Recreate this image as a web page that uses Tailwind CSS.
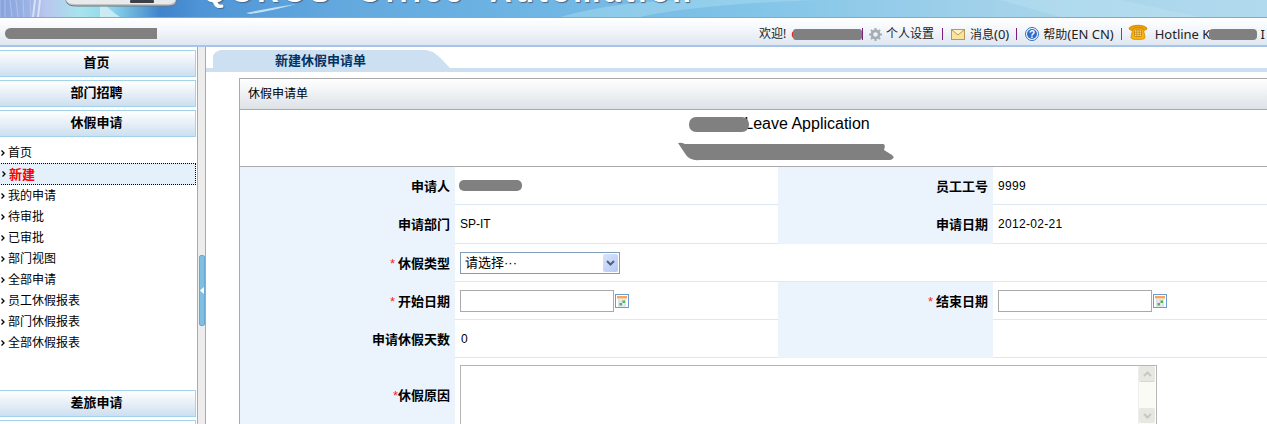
<!DOCTYPE html>
<html lang="zh-CN">
<head>
<meta charset="utf-8">
<title>休假申请单</title>
<script src="https://cdn.jsdelivr.net/npm/@tailwindcss/browser@4"></script>
</head>
<body class="bg-white">
<div class="flex h-[424px] w-[1267px] flex-col overflow-hidden bg-white font-['Liberation_Sans','Noto_Sans_CJK_SC',sans-serif] text-[12px] leading-none text-black">

  <!-- banner -->
  <header class="relative h-[18px] shrink-0 overflow-hidden border-b border-[#7fa8dc] bg-[linear-gradient(90deg,#86a3dc_0,#9db4e6_30px,#b9c6ee_45px,#a9e3ee_80px,#8fd8ea_110px,#3f84cc_160px,#4f94d6_200px,#62a8de_330px,#6cb3e3_500px,#83c5e8_760px,#a3d2ea_1000px,#b2daee_1267px)]">
    <svg class="absolute left-0 top-0" width="1267" height="17" viewBox="0 0 1267 17">
      <path d="M0 0v17M5 0v17M10 0l2 17M16 0l2 17M23 0l1 17M30 0l1 17" stroke="#c6d2f2" stroke-width="1" opacity=".6"/>
      <path d="M35 0 L33 17 M40 0 L38 17" stroke="#e8ecfb" stroke-width="2" opacity=".8"/>
      <path d="M100 0 Q112 12 120 17 L100 17 Z" fill="#dff4f8" opacity=".7"/>
      <path d="M66 0 C67 5 70 6 78 6 L168 6 C174 6 177 3 176 0 Z" fill="#c2c4c6" stroke="#6f7478" stroke-width="1"/>
      <path d="M66 0 C67 3 70 4 78 4 L168 4 C172 4 175 2 176 0 Z" fill="#e9eaec"/>
      <rect x="130" y="0" width="24" height="3" rx="1" fill="#3c4046"/>
      <path d="M246 13 Q270 8 296 4 Q272 11 250 14 Z" fill="#d8f0fa" opacity=".8"/>
      <path d="M560 17 Q620 0 700 0 L820 0 Q700 4 640 17 Z" fill="#a8dcf0" opacity=".5"/>
      <path d="M1000 0 L1120 0 L1200 17 L1060 17 Z" fill="#c4e6f4" opacity=".35"/>
    </svg>
    <span class="absolute left-[203px] top-[-24px] whitespace-nowrap text-[30px] font-bold leading-[32px] tracking-[3.8px] text-white [text-shadow:1px_1px_1px_#44668c]">QOROS&nbsp;&nbsp;Office&nbsp;&nbsp;Automation</span>
  </header>

  <!-- top bar -->
  <div class="flex h-[29px] shrink-0 items-center justify-between border-b-2 border-[#a7c4ea] bg-[linear-gradient(180deg,#ffffff_0,#f4f7fb_40%,#dfe7f1_100%)] pt-[4px] font-['Noto_Sans','Noto_Sans_CJK_SC',sans-serif] text-[#222]">
    <div class="ml-[5px] h-[11px] w-[152px] rounded-l-full rounded-r-[5px] bg-[#808080]"></div>
    <div class="mt-px flex w-[508px] shrink-0 items-center whitespace-nowrap">
      <span>欢迎!</span>
      <span class="ml-[5px] text-[#e00000]">c</span>
      <span class="ml-[-4px] h-[11px] w-[69px] rounded-[3px] bg-[#808080]"></span>
      <span class="h-[12px] w-px bg-[#7a1f7a]"></span>
      <svg class="ml-[6px]" width="13" height="13" viewBox="0 0 13 13"><circle cx="6.500" cy="6.500" r="3.600" fill="none" stroke="#a3adb3" stroke-width="2.600"/><path d="M6.500 0v2.400M6.500 10.600V13M0 6.500h2.400M10.600 6.500H13M1.900 1.900l1.700 1.700M9.400 9.400l1.700 1.700M1.900 11.100l1.700-1.700M9.400 3.600l1.700-1.700" stroke="#a3adb3" stroke-width="2"/></svg>
      <span class="ml-[4px]">个人设置</span>
      <span class="ml-[8px] h-[12px] w-px bg-[#7a1f7a]"></span>
      <svg class="ml-[8px]" width="14" height="11" viewBox="0 0 14 11"><rect x=".5" y=".5" width="13" height="10" fill="#f8e3a0" stroke="#b89a4c"/><path d="M1 1l6 5 6-5" fill="#fdf1c6" stroke="#b89a4c"/></svg>
      <span class="ml-[5px]">消息<span class="text-[13px]">(0)</span></span>
      <span class="ml-[7px] h-[12px] w-px bg-[#7a1f7a]"></span>
      <svg class="ml-[8px]" width="14" height="14" viewBox="0 0 14 14"><circle cx="7" cy="7" r="6.500" fill="#fff" stroke="#2f6fc4"/><circle cx="7" cy="7" r="5" fill="#2f6cc8"/><text x="7" y="10.500" text-anchor="middle" fill="#fff" font-size="10" font-weight="700" font-family="Liberation Sans">?</text></svg>
      <span class="ml-[4px]">帮助<span class="text-[13px]">(EN CN)</span></span>
      <span class="ml-[7px] h-[12px] w-px bg-[#2a6a8a]"></span>
      <svg class="mb-[6px] ml-[6px]" width="20" height="17" viewBox="0 0 20 17"><path d="M1 6C1 1 19 1 19 6L16.500 7.500 14 6V5H6V6L3.500 7.500Z" fill="#f0a000" stroke="#c87800" stroke-width=".7"/><path d="M4.500 7 6 5h8l1.500 2 1.500 7c0 2-2 2.500-7 2.500S3 16 3 14Z" fill="#f9b400" stroke="#cc8200" stroke-width=".7"/><rect x="6.500" y="7" width="7" height="6.500" rx="1" fill="#fde08a" stroke="#b06c00" stroke-width=".6"/><path d="M8.800 7v6.500M11.200 7v6.500M6.500 9.200h7M6.500 11.300h7" stroke="#b06c00" stroke-width=".6"/></svg>
      <span class="ml-[7px] text-[13px]">Hotline K</span>
      <span class="ml-[-1px] h-[11px] w-[48px] rounded-[4px] bg-[#808080]"></span>
      <span class="ml-[3px] text-[13px]">I</span>
    </div>
  </div>

  <div class="flex min-h-0 flex-1">
    <!-- sidebar -->
    <aside class="w-[197px] shrink-0 overflow-hidden bg-white pt-[3px]">
      <div class="-ml-[3px] flex w-[199px] flex-col gap-[3px]">
        <div class="flex h-[27px] items-center justify-center border border-[#a3d3ea] bg-[linear-gradient(180deg,#ffffff_0,#cddff0_100%)] pb-[2px] text-[13px] font-bold">首页</div>
        <div class="flex h-[27px] items-center justify-center border border-[#a3d3ea] bg-[linear-gradient(180deg,#ffffff_0,#cddff0_100%)] pb-[2px] text-[13px] font-bold">部门招聘</div>
        <div class="flex h-[27px] items-center justify-center border border-[#a3d3ea] bg-[linear-gradient(180deg,#ffffff_0,#cddff0_100%)] pb-[2px] text-[13px] font-bold">休假申请</div>
      </div>
      <ul class="mt-[4px] h-[249px] pt-px">
        <li class="flex h-[21px] items-center gap-[3px] pl-[1px]"><svg width="4" height="6" viewBox="0 0 4 6"><path d="M.5 .5 3 3 .5 5.500" fill="none" stroke="#000" stroke-width="1.300"/></svg>首页</li>
        <li class="-ml-[3px] flex h-[22px] w-[199px] items-center gap-[3px] border border-dotted border-black bg-[#e4f1fb] pl-[4px] text-[13px] font-bold text-[#ff0000]"><svg width="4" height="6" viewBox="0 0 4 6"><path d="M.5 .5 3 3 .5 5.500" fill="none" stroke="#000" stroke-width="1.300"/></svg>新建</li>
        <li class="flex h-[21px] items-center gap-[3px] pl-[1px]"><svg width="4" height="6" viewBox="0 0 4 6"><path d="M.5 .5 3 3 .5 5.500" fill="none" stroke="#000" stroke-width="1.300"/></svg>我的申请</li>
        <li class="flex h-[21px] items-center gap-[3px] pl-[1px]"><svg width="4" height="6" viewBox="0 0 4 6"><path d="M.5 .5 3 3 .5 5.500" fill="none" stroke="#000" stroke-width="1.300"/></svg>待审批</li>
        <li class="flex h-[21px] items-center gap-[3px] pl-[1px]"><svg width="4" height="6" viewBox="0 0 4 6"><path d="M.5 .5 3 3 .5 5.500" fill="none" stroke="#000" stroke-width="1.300"/></svg>已审批</li>
        <li class="flex h-[21px] items-center gap-[3px] pl-[1px]"><svg width="4" height="6" viewBox="0 0 4 6"><path d="M.5 .5 3 3 .5 5.500" fill="none" stroke="#000" stroke-width="1.300"/></svg>部门视图</li>
        <li class="flex h-[21px] items-center gap-[3px] pl-[1px]"><svg width="4" height="6" viewBox="0 0 4 6"><path d="M.5 .5 3 3 .5 5.500" fill="none" stroke="#000" stroke-width="1.300"/></svg>全部申请</li>
        <li class="flex h-[21px] items-center gap-[3px] pl-[1px]"><svg width="4" height="6" viewBox="0 0 4 6"><path d="M.5 .5 3 3 .5 5.500" fill="none" stroke="#000" stroke-width="1.300"/></svg>员工休假报表</li>
        <li class="flex h-[21px] items-center gap-[3px] pl-[1px]"><svg width="4" height="6" viewBox="0 0 4 6"><path d="M.5 .5 3 3 .5 5.500" fill="none" stroke="#000" stroke-width="1.300"/></svg>部门休假报表</li>
        <li class="flex h-[21px] items-center gap-[3px] pl-[1px]"><svg width="4" height="6" viewBox="0 0 4 6"><path d="M.5 .5 3 3 .5 5.500" fill="none" stroke="#000" stroke-width="1.300"/></svg>全部休假报表</li>
      </ul>
      <div class="-ml-[3px] flex w-[199px] flex-col gap-[3px]">
        <div class="flex h-[27px] shrink-0 items-center justify-center border border-[#a3d3ea] bg-[linear-gradient(180deg,#ffffff_0,#cddff0_100%)] pb-[2px] text-[13px] font-bold">差旅申请</div>
        <div class="h-[27px] shrink-0 border border-[#a3d3ea] bg-white"></div>
      </div>
    </aside>

    <!-- splitter -->
    <div class="w-[9px] shrink-0 border-x border-[#aaaaaa] bg-[#ededed] pl-px pt-[208px]">
      <div class="flex h-[71px] w-[6px] items-center justify-center rounded-[2px] border border-[#6aa9d6] bg-[#7fc0e2]">
        <svg width="4" height="7" viewBox="0 0 4 7"><path d="M4 0v7L0 3.500Z" fill="#fff"/></svg>
      </div>
    </div>

    <!-- main -->
    <main class="min-w-0 flex-1 overflow-hidden pt-[3px]">
      <div class="ml-[7px] flex h-[18px] w-[237px] items-center justify-center bg-[#cde0f1] pr-[22px] pt-[2px] text-[13px] font-bold text-[#003366] [clip-path:polygon(0_100%,0_30%,1%_12%,3%_0,90%_0,93%_12%,96%_45%,100%_100%)]">新建休假申请单</div>
      <div class="h-[4px] bg-[#cde0f1]"></div>

      <section class="ml-[33px] mt-[6px] w-[1080px] border-l border-t border-[#aaaaaa]">
        <div class="flex h-[31px] items-center border-b border-[#aaaaaa] bg-[linear-gradient(180deg,#ffffff_0,#dde2e7_100%)] pl-[8px]">休假申请单</div>
        <div class="flex h-[57px] flex-col items-center border-b border-[#aaaaaa] pt-[6px]">
          <div class="flex h-[16px] items-center text-[16px]">
            <span class="relative z-10 h-[15px] w-[60px] rounded-[7px] bg-[#808080]"></span>
            <span class="ml-[-5px]">Leave Application</span>
          </div>
          <svg class="ml-[14px] mt-[10px]" width="217" height="19" viewBox="0 0 217 19"><path d="M0 1 Q3 0 7 2 L205 2 Q208 2 206 8 L214 13 Q218 16 212 18 L22 18 Q12 19 8 13 Z" fill="#808080"/></svg>
        </div>

        <div class="grid grid-cols-[215px_323px_215px_1fr] grid-rows-[38px_39px_38px_38px_38px_80px]">
          <div class="flex items-center justify-end bg-[#ebf4fd] pr-[5px] text-[13px] font-bold">申请人</div>
          <div class="flex items-center border-b border-[#dce8f3] pl-[4px]"><span class="h-[11px] w-[63px] rounded-[5px] bg-[#808080]"></span></div>
          <div class="flex items-center justify-end bg-[#ebf4fd] pr-[5px] text-[13px] font-bold">员工工号</div>
          <div class="flex items-center border-b border-[#dce8f3] pl-[5px] tracking-[0.3px]">9999</div>

          <div class="flex items-center justify-end bg-[#ebf4fd] pr-[5px] text-[13px] font-bold">申请部门</div>
          <div class="flex items-center border-b border-[#dce8f3] pl-[5px]">SP-IT</div>
          <div class="flex items-center justify-end bg-[#ebf4fd] pr-[5px] text-[13px] font-bold">申请日期</div>
          <div class="flex items-center border-b border-[#dce8f3] pl-[5px] tracking-[0.3px]">2012-02-21</div>

          <div class="flex items-center justify-end bg-[#ebf4fd] pr-[5px] text-[13px] font-bold"><span class="mr-[3px] font-normal text-[#ff2020]">*</span>休假类型</div>
          <div class="col-span-3 flex items-center border-b border-[#dce8f3] pl-[5px]">
            <div class="flex h-[22px] w-[160px] items-center justify-between border border-[#7f9db9] bg-white pl-[4px] pr-px">
              <span class="text-[13px]">请选择···</span>
              <span class="flex h-[18px] w-[15px] items-center justify-center rounded-[2px] bg-[linear-gradient(135deg,#d8e4fb,#b6c9f4)]"><svg width="9" height="6" viewBox="0 0 9 6"><path d="M1 1l3.500 3.500L8 1" fill="none" stroke="#4d6185" stroke-width="2"/></svg></span>
            </div>
          </div>

          <div class="flex items-center justify-end bg-[#ebf4fd] pr-[5px] text-[13px] font-bold"><span class="mr-[3px] font-normal text-[#ff2020]">*</span>开始日期</div>
          <div class="flex items-center gap-px border-b border-[#dce8f3] pl-[5px]">
            <div class="h-[22px] w-[154px] border border-[#a9a9a9] bg-white"></div>
            <svg width="14" height="14" viewBox="0 0 14 14"><rect x=".5" y=".5" width="13" height="13" fill="#fff" stroke="#6b9bd2"/><rect x="2" y="2" width="10" height="2.500" fill="#f5a65b"/><path d="M3 6h8M3 8h8M3 10h8M3 12h8M4 5v7.500M7 5v7.500M10 5v7.500" stroke="#c7d2de" stroke-width=".8"/><rect x="7.500" y="6.500" width="2.500" height="2.500" fill="#58b058"/><rect x="4.500" y="9" width="2.500" height="2.500" fill="#58b058"/></svg>
          </div>
          <div class="flex items-center justify-end bg-[#ebf4fd] pr-[5px] text-[13px] font-bold"><span class="mr-[3px] font-normal text-[#ff2020]">*</span>结束日期</div>
          <div class="flex items-center gap-px border-b border-[#dce8f3] pl-[5px]">
            <div class="h-[22px] w-[154px] border border-[#a9a9a9] bg-white"></div>
            <svg width="14" height="14" viewBox="0 0 14 14"><rect x=".5" y=".5" width="13" height="13" fill="#fff" stroke="#6b9bd2"/><rect x="2" y="2" width="10" height="2.500" fill="#f5a65b"/><path d="M3 6h8M3 8h8M3 10h8M3 12h8M4 5v7.500M7 5v7.500M10 5v7.500" stroke="#c7d2de" stroke-width=".8"/><rect x="7.500" y="6.500" width="2.500" height="2.500" fill="#58b058"/><rect x="4.500" y="9" width="2.500" height="2.500" fill="#58b058"/></svg>
          </div>

          <div class="flex items-center justify-end bg-[#ebf4fd] pr-[5px] text-[13px] font-bold">申请休假天数</div>
          <div class="flex items-center border-b border-[#dce8f3] pl-[6px]">0</div>
          <div class="bg-[#ebf4fd]"></div>
          <div class="border-b border-[#dce8f3]"></div>

          <div class="flex items-center justify-end bg-[#ebf4fd] pb-[5px] pr-[5px] text-[13px] font-bold"><span class="font-normal text-[#ff2020]">*</span>休假原因</div>
          <div class="col-span-3 pl-[5px] pt-[7px]">
            <div class="flex h-[80px] w-[697px] justify-end border border-[#b5b5b5] bg-white pr-px">
              <div class="flex w-[17px] flex-col justify-between border-l border-[#eeeeee] bg-[#fbfbf6]">
                <div class="flex h-[16px] items-center justify-center rounded-[2px] border-b border-[#d8d8c0] bg-[#e8e8e2]"><svg width="9" height="6" viewBox="0 0 9 6"><path d="M1 5l3.500-3.500L8 5" fill="none" stroke="#c8c8c0" stroke-width="2"/></svg></div>
                <div class="mb-[21px] flex h-[15px] items-center justify-center rounded-[2px] bg-[#e8e8e2]"><svg width="9" height="6" viewBox="0 0 9 6"><path d="M1 1l3.500 3.500L8 1" fill="none" stroke="#c8c8c0" stroke-width="2"/></svg></div>
              </div>
            </div>
          </div>
        </div>
      </section>
    </main>
  </div>
</div>
</body>
</html>
